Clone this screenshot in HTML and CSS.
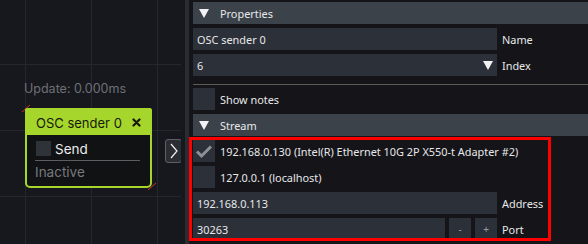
FILE: index.html
```html
<!DOCTYPE html>
<html>
<head>
<meta charset="utf-8">
<link rel="stylesheet" href="styles.css">
</head>
<body>
<div class="app">
  <div class="canvas">
    <div class="update">Update: 0.000ms</div>
    <svg class="mark mark-tl" width="10" height="9" viewBox="0 0 10 9"><line x1="1" y1="8" x2="9" y2="1" stroke="#d0302c" stroke-width="1"/></svg>
    <div class="node">
      <div class="node-head">
        <span class="node-title">OSC sender 0</span>
        <svg class="node-x" width="9" height="9" viewBox="0 0 9 9"><path d="M1.5 1.5 L7.5 7.5 M7.5 1.5 L1.5 7.5" stroke="#16180c" stroke-width="2.2" stroke-linecap="round"/></svg>
      </div>
      <div class="node-body">
        <div class="node-row"><span class="node-check"></span><span class="node-send">Send</span></div>
        <div class="node-line"></div>
        <div class="node-status">Inactive</div>
      </div>
    </div>
    <svg class="mark mark-br" width="10" height="9" viewBox="0 0 10 9"><line x1="1" y1="8" x2="9" y2="1" stroke="#d0302c" stroke-width="1"/></svg>
    <div class="expand"><svg width="10" height="18" viewBox="0 0 10 18"><path d="M2 2 L8 9 L2 16" fill="none" stroke="#f0f0f0" stroke-width="1.2"/></svg></div>
  </div>
  <div class="gutter"><div class="scroll"></div></div>
  <div class="panel">
    <div class="header"><span class="tri"></span><span>Properties</span></div>
    <div class="row"><div class="field wide">OSC sender 0</div><span class="label">Name</span></div>
    <div class="row"><div class="field wide combo"><span>6</span><span class="tri small"></span></div><span class="label">Index</span></div>
    <div class="sep"></div>
    <div class="row"><div class="box"></div><span class="label">Show notes</span></div>
    <div class="header"><span class="tri"></span><span>Stream</span></div>
    <div class="row"><div class="box"><svg width="22" height="22" viewBox="0 0 22 22"><path d="M4 11.5 L8.5 16 L18 6.5" fill="none" stroke="#8d9095" stroke-width="3"/></svg></div><span class="label">192.168.0.130 (Intel(R) Ethernet 10G 2P X550-t Adapter #2)</span></div>
    <div class="row"><div class="box"></div><span class="label">127.0.0.1 (localhost)</span></div>
    <div class="row"><div class="field wide">192.168.0.113</div><span class="label">Address</span></div>
    <div class="row"><div class="field port">30263</div><div class="btn">-</div><div class="btn">+</div><span class="label">Port</span></div>
    <div class="highlight"></div>
  </div>
</div>
</body>
</html>
```
FILE: styles.css
```css
* { box-sizing: border-box; }
html, body { margin: 0; padding: 0; }
body {
  width: 588px;
  height: 244px;
  overflow: hidden;
  background: #141419;
}
.app {
  display: flex;
  width: 588px;
  height: 244px;
}
.canvas {
  position: relative;
  width: 185px;
  height: 244px;
  background-color: #17181d;
  background-image:
    linear-gradient(to right, #25272e 1px, transparent 1px),
    linear-gradient(to bottom, #25272e 1px, transparent 1px);
  background-size: 66px 66px, 66px 66px;
  background-position: 25px 0, 0 64px;
  flex: none;
  font-family: Inter, "Noto Sans", sans-serif;
}
.canvas::after {
  content: "";
  position: absolute;
  right: 0;
  top: 0;
  width: 4px;
  height: 244px;
  background: #17181d;
}
.update {
  position: absolute;
  left: 24px;
  top: 81px;
  font-size: 12.5px;
  line-height: 16px;
  color: #6d7076;
}
.mark { position: absolute; }
.mark-tl { left: 21px; top: 104px; }
.mark-br { left: 147px; top: 182px; }
.node {
  position: absolute;
  left: 25px;
  top: 108px;
  width: 127px;
  height: 80px;
  border: 2px solid #a6d62c;
  border-radius: 3px 3px 5px 5px;
  background: #111214;
  display: flex;
  flex-direction: column;
}
.node-head {
  height: 27px;
  margin: -2px -2px 0 -2px;
  background: #a6d62c;
  border-radius: 3px 3px 0 0;
  display: flex;
  align-items: center;
  justify-content: space-between;
  padding: 2px 11px 0 11px;
}
.node-title {
  font-size: 13px;
  color: #17190d;
}
.node-x { flex: none; }
.node-body {
  padding: 6px 10px 0 8px;
  display: flex;
  flex-direction: column;
}
.node-row {
  display: flex;
  align-items: center;
  gap: 4px;
  height: 15px;
  padding-left: 1px;
}
.node-check {
  width: 15px;
  height: 15px;
  background: #2e3239;
}
.node-send {
  font-size: 13.5px;
  color: #ececec;
}
.node-line {
  height: 1px;
  background: #5b5d61;
  margin-top: 4px;
}
.node-status {
  font-size: 13.5px;
  color: #77797e;
  margin-top: 1px;
  line-height: 20px;
}
.expand {
  position: absolute;
  left: 165px;
  top: 139px;
  width: 17px;
  height: 24px;
  border: 1px solid #5d6066;
  border-radius: 3px;
  background: #2a2d33;
  display: flex;
  align-items: center;
  justify-content: center;
}
.gutter {
  width: 8px;
  flex: none;
  background: #141419;
}
.scroll {
  width: 4px;
  height: 244px;
  background: #2a2c32;
}
.panel {
  position: relative;
  flex: 1;
  padding: 2px 0 0 0;
  display: flex;
  flex-direction: column;
  gap: 4px;
  font-family: "Noto Sans", sans-serif;
  font-size: 10.9px;
  color: #e8e8ea;
}
.header {
  height: 22px;
  flex: none;
  background: #3b424a;
  display: flex;
  align-items: center;
  padding-left: 6px;
  gap: 11px;
}
.tri {
  width: 0;
  height: 0;
  border-left: 5.5px solid transparent;
  border-right: 5.5px solid transparent;
  border-top: 9px solid #f2f2f4;
}
.row {
  height: 22px;
  flex: none;
  display: flex;
  align-items: center;
  gap: 4px;
}
.field {
  height: 22px;
  background: #2c3038;
  display: flex;
  align-items: center;
  padding-left: 4px;
}
.wide { width: 304px; }
.combo {
  justify-content: space-between;
  padding-right: 4px;
}
.port { width: 252px; }
.btn {
  width: 22px;
  height: 22px;
  background: #2c3038;
  color: #9b9ea3;
  font-size: 10px;
  display: flex;
  align-items: center;
  justify-content: center;
}
.label {
  white-space: nowrap;
  padding-left: 1px;
}
.box {
  width: 22px;
  height: 22px;
  background: #2c3038;
  flex: none;
}
.box svg { display: block; }
.sep {
  height: 1px;
  flex: none;
  background: #5d5a57;
  margin: 4px 0 -1px 0;
}
.highlight {
  position: absolute;
  left: -4px;
  top: 137px;
  width: 362px;
  height: 104px;
  border: 3px solid #ff0000;
}
```
